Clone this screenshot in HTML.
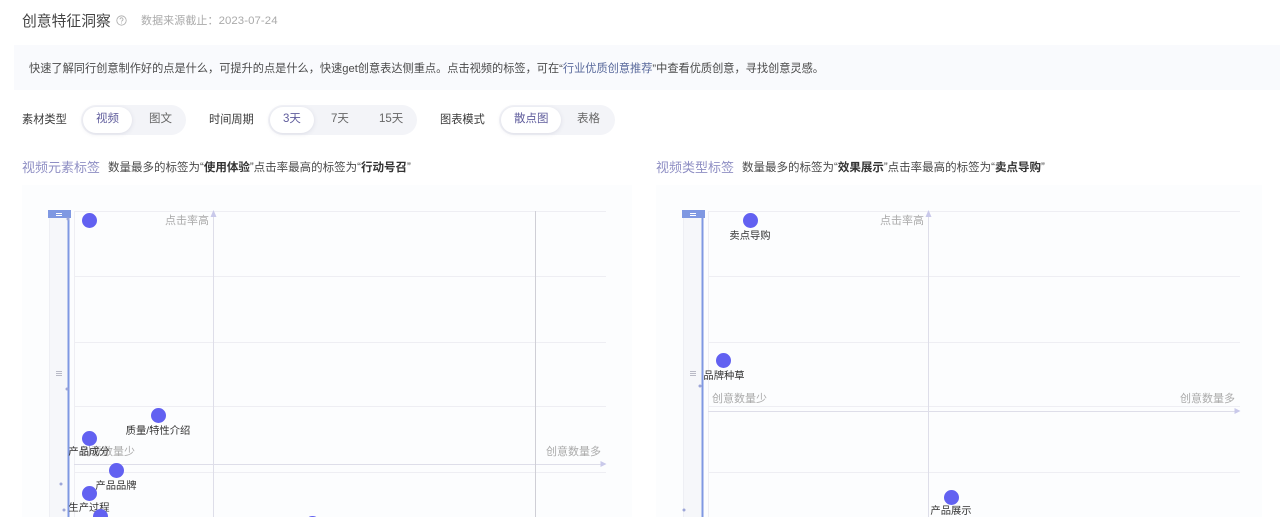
<!DOCTYPE html>
<html lang="zh"><head><meta charset="utf-8"><style>
html,body{margin:0;padding:0;width:1280px;height:517px;overflow:hidden;background:#fff}
body{position:relative;font-family:"Liberation Sans","Noto Sans CJK SC",sans-serif;color:#333}
#w{position:absolute;left:0;top:0;width:1280px;height:517px;filter:blur(.35px)}
.a{position:absolute;white-space:nowrap;line-height:1}
.r{position:absolute}
.seg{position:absolute;top:105px;height:30px;border-radius:15px;background:#f3f4f8}
.on{position:absolute;top:107px;height:26px;border-radius:13px;background:#fff;box-shadow:0 1px 5px rgba(60,60,110,.13)}
.l{font-size:11.2px;color:#3a3a3a;top:115px}
.t{font-size:11.5px;color:#666;top:114px}
.p{position:absolute;width:15px;height:15px;border-radius:50%;background:#6261f1}
.lb{position:absolute;font-size:10.3px;line-height:1;color:#333;white-space:nowrap;transform:translateX(-50%)}
.g{position:absolute;font-size:11px;line-height:1;color:#aaa;white-space:nowrap}
</style></head><body><div id="w">
<div class="a" style="left:22px;top:15px;font-size:14.8px;color:#444">创意特征洞察</div>
<svg class="r" style="left:116px;top:15px" width="11" height="11" viewBox="0 0 11 11"><circle cx="5.5" cy="5.5" r="4.7" fill="none" stroke="#aaa" stroke-width=".8"/><path d="M4 4.3a1.5 1.5 0 1 1 2.2 1.3c-.5.3-.7.5-.7 1" fill="none" stroke="#aaa" stroke-width=".8"/><circle cx="5.5" cy="8" r=".5" fill="#aaa"/></svg>
<div class="a" style="left:141px;top:16px;font-size:11px;color:#aaa;letter-spacing:.08px">数据来源截止：<span style="font-size:11.4px">2023-07-24</span></div>

<div class="r" style="left:14px;top:45px;width:1266px;height:45px;background:#f9fafd"></div>
<div class="a" style="left:29px;top:64px;font-size:11.2px;color:#4a4a4a">快速了解同行创意制作好的点是什么，可提升的点是什么，快速get创意表达侧重点。点击视频的标签，可在“<span style="color:#5a6a9c">行业优质创意推荐</span>”中查看优质创意，寻找创意灵感。</div>

<div class="a l" style="left:22px">素材类型</div>
<div class="seg" style="left:81px;width:105px"></div><div class="on" style="left:83px;width:49px"></div>
<div class="a t" style="left:96px;color:#5f5c9c">视频</div><div class="a t" style="left:149px">图文</div>

<div class="a l" style="left:209px">时间周期</div>
<div class="seg" style="left:268px;width:149px"></div><div class="on" style="left:270px;width:44px"></div>
<div class="a t" style="left:283px;color:#5f5c9c">3天</div><div class="a t" style="left:331px">7天</div><div class="a t" style="left:379px">15天</div>

<div class="a l" style="left:440px">图表模式</div>
<div class="seg" style="left:499px;width:116px"></div><div class="on" style="left:501px;width:60px"></div>
<div class="a t" style="left:514px;color:#5f5c9c">散点图</div><div class="a t" style="left:577px">表格</div>

<div class="a" style="left:22px;top:161px;color:#8f8fc4;font-size:13px">视频元素标签</div>
<div class="a" style="left:108px;top:163px;font-size:11.5px;color:#4a4a4a">数量最多的标签为“<b style="color:#333">使用体验</b>”点击率最高的标签为“<b style="color:#333">行动号召</b>”</div>
<div class="a" style="left:656px;top:161px;color:#8f8fc4;font-size:13px">视频类型标签</div>
<div class="a" style="left:742px;top:163px;font-size:11.5px;color:#4a4a4a">数量最多的标签为“<b style="color:#333">效果展示</b>”点击率最高的标签为“<b style="color:#333">卖点导购</b>”</div>

<div class="r" style="left:22px;top:185px;width:610px;height:332px;background:#fcfdfe"></div>
<div class="r" style="left:656px;top:185px;width:606px;height:332px;background:#fcfdfe"></div>

<svg class="r" style="left:0;top:0" width="1280" height="517" viewBox="0 0 1280 517">
<g fill="#f6f7fa" stroke="#eeeff4" stroke-width="1">
<rect x="49.5" y="214.5" width="19" height="310"/><rect x="683.5" y="214.5" width="19" height="310"/>
</g>
<g stroke="#eeeef3" stroke-width="1">
<path d="M74 211.5H606M74 276.5H606M74 342.5H606M74 406.5H606M74 472.5H606"/>
<path d="M708 211.5H1240M708 276.5H1240M708 342.5H1240M708 406.5H1240M708 472.5H1240"/>
<path d="M74.5 211V517M708.5 211V517"/>
</g>
<g stroke="#dedee9" stroke-width="1"><path d="M213.5 214V517M928.5 214V517M74 464.5H602M708 411.5H1236"/></g>
<path d="M535.5 211V517" stroke="#cfcfd6"/>
<g fill="#c9c9ea"><path d="M213.5 210l3 7h-6zM928.5 210l3 7h-6zM606.5 464l-6-3v6zM1240.5 411l-6-3v6z"/></g>
<g fill="#7f98e2"><rect x="48" y="210" width="23" height="8"/><rect x="682" y="210" width="23" height="8"/><rect x="67.5" y="218" width="2" height="299"/><rect x="701.5" y="218" width="2" height="299"/></g>
<g stroke="#fff" stroke-width="1"><path d="M56 213.5h6M56 215.5h6M690 213.5h6M690 215.5h6"/></g>
<g stroke="#b9bac6" stroke-width="1"><path d="M56 371.5h6M56 373.5h6M56 375.5h6M690 371.5h6M690 373.5h6M690 375.5h6"/></g>
<g fill="#9da6d8"><circle cx="67" cy="389" r="1.5"/><circle cx="61" cy="484" r="1.5"/><circle cx="64" cy="510" r="1.5"/><circle cx="700" cy="386" r="1.5"/><circle cx="684" cy="510" r="1.5"/><circle cx="68" cy="219" r="1.5"/></g>
</svg>

<div class="g" style="left:165px;top:216px">点击率高</div>
<div class="g" style="left:880px;top:216px">点击率高</div>
<div class="g" style="left:546px;top:447px">创意数量多</div>
<div class="g" style="left:80px;top:447px">创意数量少</div>
<div class="g" style="left:1180px;top:394px">创意数量多</div>
<div class="g" style="left:712px;top:394px">创意数量少</div>

<div class="p" style="left:82px;top:213px"></div>
<div class="p" style="left:151px;top:408px"></div><div class="lb" style="left:158px;top:426px;margin-top:1px">质量/特性介绍</div>
<div class="p" style="left:82px;top:431px"></div><div class="lb" style="left:89px;top:448px">产品成分</div>
<div class="p" style="left:109px;top:463px"></div><div class="lb" style="left:116px;top:482px">产品品牌</div>
<div class="p" style="left:82px;top:486px"></div><div class="lb" style="left:89px;top:504px">生产过程</div>
<div class="p" style="left:93px;top:509px"></div>
<div class="p" style="left:305px;top:516px"></div>

<div class="p" style="left:743px;top:213px"></div><div class="lb" style="left:750px;top:232px">卖点导购</div>
<div class="p" style="left:716px;top:353px"></div><div class="lb" style="left:724px;top:372px">品牌种草</div>
<div class="p" style="left:944px;top:490px"></div><div class="lb" style="left:951px;top:507px">产品展示</div>
</div></body></html>
